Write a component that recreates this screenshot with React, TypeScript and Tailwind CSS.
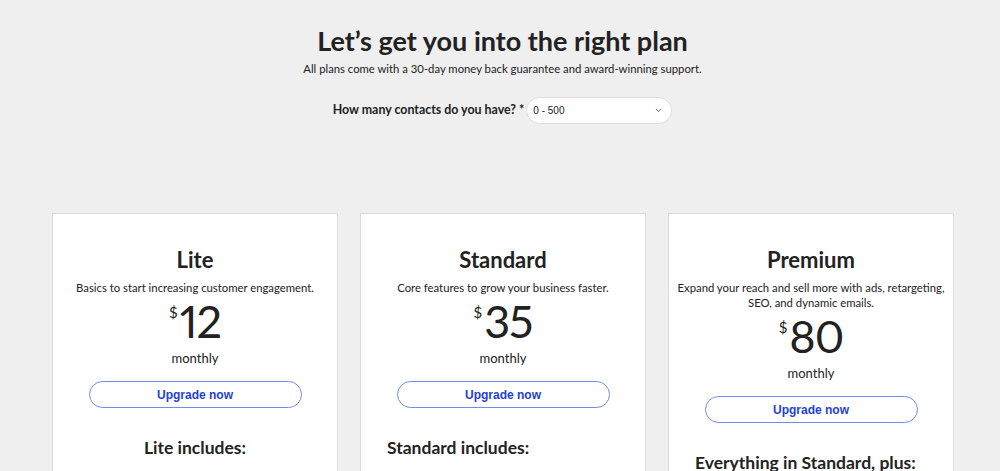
import { ChevronDown } from "lucide-react";

interface Plan {
  name: string;
  blurb: string[];
  price: string;
  includes: string;
  centered: boolean;
}

const plans: Plan[] = [
  {
    name: "Lite",
    blurb: ["Basics to start increasing customer engagement."],
    price: "12",
    includes: "Lite includes:",
    centered: true,
  },
  {
    name: "Standard",
    blurb: ["Core features to grow your business faster."],
    price: "35",
    includes: "Standard includes:",
    centered: false,
  },
  {
    name: "Premium",
    blurb: ["Expand your reach and sell more with ads, retargeting,", "SEO, and dynamic emails."],
    price: "80",
    includes: "Everything in Standard, plus:",
    centered: false,
  },
];

function PlanCard({ plan }: { plan: Plan }) {
  return (
    <div className="bg-white border border-[#dcdcdc] flex flex-col items-center pt-[32px] px-[8px] pb-10">
      <h2 className="text-[22px] leading-[28px] font-bold text-[#222]">{plan.name}</h2>
      <div className="mt-[6px] text-[11.3px] leading-[15px] text-[#222] text-center whitespace-nowrap">
        {plan.blurb.map((line) => (
          <p key={line}>{line}</p>
        ))}
      </div>
      <div className="flex items-start text-[#222] mt-[1px]">
        <span className="text-[15px] leading-none mt-[9px] mr-[2px]">$</span>
        <span className="text-[45px] leading-[50px] tracking-[-1px] proportional-nums">{plan.price}</span>
      </div>
      <p className="text-[13px] leading-[18px] text-[#222] mt-[3px]">monthly</p>
      <button className="mt-[14px] w-[213px] h-[27px] rounded-full border border-[#6e8bf0] bg-white text-[#1e3fd6] text-[12px] font-bold font-['Liberation_Sans',Arial,sans-serif]">
        Upgrade now
      </button>
      <h3
        className={
          plan.centered
            ? "mt-[28px] text-[17.5px] leading-[24px] font-bold text-[#222] self-center whitespace-nowrap"
            : "mt-[28px] pl-[18px] text-[17.5px] leading-[24px] font-bold text-[#222] self-start whitespace-nowrap"
        }
      >
        {plan.includes}
      </h3>
    </div>
  );
}

export default function App() {
  return (
    <div className="min-h-screen bg-[#efefef] font-['Lato','Noto_Sans',sans-serif] text-[#222] overflow-hidden">
      <div className="flex flex-col items-center pt-[26px] pl-[5px]">
        <h1 className="text-[27px] leading-[30px] font-bold">Let’s get you into the right plan</h1>
        <p className="mt-[5px] text-[11.3px] leading-[15px]">
          All plans come with a 30-day money back guarantee and award-winning support.
        </p>
        <div className="mt-[21px] flex items-center gap-[2px]">
          <label className="text-[12.4px] font-bold">How many contacts do you have? *</label>
          <div className="relative w-[146px] h-[27px] rounded-full bg-white border border-[#dddddd] flex items-center pl-[6px] pr-[8px]">
            <span className="text-[10px] font-['Liberation_Sans',Arial,sans-serif] flex-1">0 - 500</span>
            <ChevronDown className="w-[9px] h-[9px] text-[#555]" strokeWidth={2.5} />
          </div>
        </div>
      </div>
      <div className="mt-[89px] ml-[52px] grid grid-cols-[286px_286px_286px] gap-[22px]">
        {plans.map((p) => (
          <PlanCard key={p.name} plan={p} />
        ))}
      </div>
    </div>
  );
}
